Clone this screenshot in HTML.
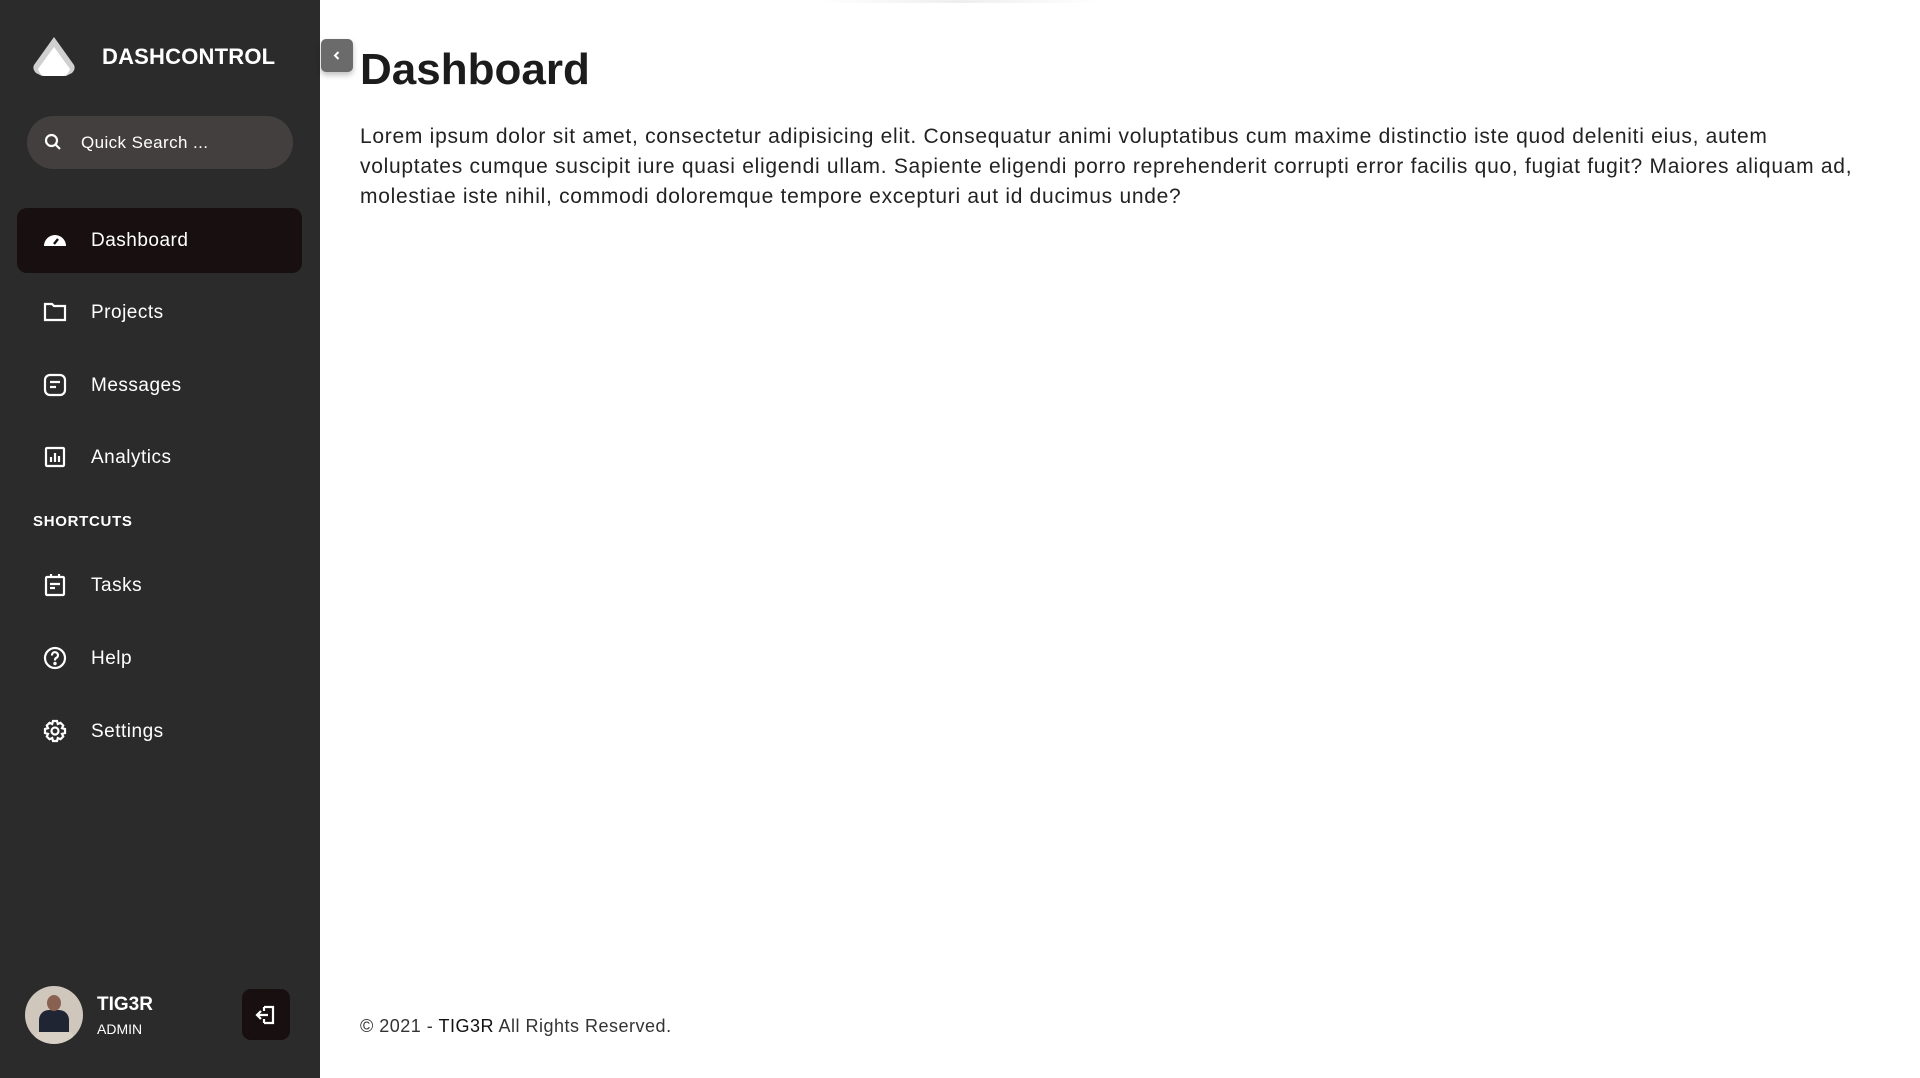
<!DOCTYPE html>
<html><head><meta charset="utf-8"><style>
*{margin:0;padding:0;box-sizing:border-box}
body{width:1920px;height:1078px;overflow:hidden;background:#fff;font-family:"Liberation Sans",sans-serif;position:relative}
.sb{position:absolute;left:0;top:0;width:320px;height:1078px;background:#2b2b2b;color:#fff}
.abs{position:absolute}
.brand{left:102px;top:44px;font-size:22px;font-weight:bold;letter-spacing:0.2px}
.search{left:27px;top:116px;width:266px;height:53px;border-radius:27px;background:#433f3f}
.search span{position:absolute;left:54px;top:17px;font-size:17px;letter-spacing:0.4px}
.item{position:absolute;left:17px;width:285px;height:65px;border-radius:10px;font-size:19px;letter-spacing:0.5px}
.item.act{background:#170f10}
.item svg{position:absolute;left:26px;top:20px}
.item span{position:absolute;left:74px;top:22px}
.sc{left:33px;top:513px;font-size:15px;font-weight:bold;letter-spacing:0.7px}
.toggle{left:321px;top:39px;width:32px;height:33px;border-radius:5px;background:#6b6b6b;box-shadow:0 3px 6px rgba(0,0,0,.25)}
h1{position:absolute;left:360px;top:45px;font-size:44px;font-weight:bold;color:#1c1c1c}
p.t{position:absolute;left:360px;top:122px;font-size:21px;line-height:30px;color:#222;white-space:nowrap;letter-spacing:0.72px}
.foot{left:360px;top:1016px;font-size:18px;color:#333;letter-spacing:0.5px}
</style></head><body>
<div class="sb">
 <svg class="abs" style="left:32px;top:35px" width="44" height="42" viewBox="0 0 44 42"><path d="M22 2 L42 30 Q44 34 40 38 L34 41 H10 L4 38 Q0 34 2 30 Z" fill="#d0d0d0"/><path d="M22 12 L38 34 Q36 40 32 41 H12 Q8 40 6 34 Z" fill="#fff"/></svg>
 <div class="abs brand">DASHCONTROL</div>
 <div class="abs search"><svg class="abs" style="left:17px;top:17px" width="18" height="18" viewBox="0 0 18 18" fill="none" stroke="#fff" stroke-width="2.2"><circle cx="7.5" cy="7.5" r="5.5"/><path d="M11.5 11.5 L16 16"/></svg><span>Quick Search ...</span></div>
 <div class="item act" style="top:208px"><svg width="24" height="24" viewBox="0 0 24 24"><path d="M1 19 A11 11 0 0 1 23 19 Z" fill="#fff" transform="translate(0,-1)"/><path d="M11 16 L15 11" stroke="#170f10" stroke-width="2.4"/></svg><span>Dashboard</span></div>
 <div class="item" style="top:280px"><svg width="24" height="24" viewBox="0 0 24 24" fill="none" stroke="#fff" stroke-width="2.2"><path d="M2 4 H9 L11 6 H22 V20 H2 Z"/></svg><span>Projects</span></div>
 <div class="item" style="top:353px"><svg width="24" height="24" viewBox="0 0 24 24" fill="none" stroke="#fff" stroke-width="2.2"><rect x="2" y="2" width="20" height="20" rx="5"/><path d="M7 9 H17 M7 14 H13"/></svg><span>Messages</span></div>
 <div class="item" style="top:425px"><svg width="24" height="24" viewBox="0 0 24 24" fill="none" stroke="#fff" stroke-width="2.2"><rect x="3" y="3" width="18" height="18" rx="1"/><path d="M8 17 V12 M12 17 V8 M16 17 V11"/></svg><span>Analytics</span></div>
 <div class="abs sc">SHORTCUTS</div>
 <div class="item" style="top:553px"><svg width="24" height="24" viewBox="0 0 24 24" fill="none" stroke="#fff" stroke-width="2.2"><rect x="3" y="4" width="18" height="18" rx="1"/><path d="M8 1 V5 M16 1 V5 M7 11 H17 M7 15 H12"/></svg><span>Tasks</span></div>
 <div class="item" style="top:626px"><svg width="24" height="24" viewBox="0 0 24 24" fill="none" stroke="#fff" stroke-width="2.2"><circle cx="12" cy="12" r="10"/><path d="M9 9.5 A3 3 0 1 1 13 12 Q12 12.5 12 14.5"/><circle cx="12" cy="17.5" r="0.6" fill="#fff"/></svg><span>Help</span></div>
 <div class="item" style="top:699px"><svg width="24" height="24" viewBox="0 0 24 24" fill="none" stroke="#fff" stroke-width="2.2"><path d="M10 2 H14 L14.8 5 L17.5 3.8 L20.2 6.5 L19 9.2 L22 10 V14 L19 14.8 L20.2 17.5 L17.5 20.2 L14.8 19 L14 22 H10 L9.2 19 L6.5 20.2 L3.8 17.5 L5 14.8 L2 14 V10 L5 9.2 L3.8 6.5 L6.5 3.8 L9.2 5 Z"/><circle cx="12" cy="12" r="3.5"/></svg><span>Settings</span></div>
 <div class="abs" style="left:25px;top:986px;width:58px;height:58px;border-radius:50%;background:#cfc6bc;overflow:hidden"><div style="position:absolute;left:14px;top:24px;width:30px;height:36px;background:#1f2533;border-radius:10px 10px 0 0"></div><div style="position:absolute;left:22px;top:9px;width:14px;height:16px;background:#8a6150;border-radius:50%"></div><div style="position:absolute;left:10px;top:46px;width:38px;height:12px;background:#d8d0c4;border-radius:4px"></div></div>
 <div class="abs" style="left:97px;top:994px;font-size:19px;font-weight:bold">TIG3R</div>
 <div class="abs" style="left:97px;top:1021px;font-size:14px">ADMIN</div>
 <div class="abs" style="left:242px;top:989px;width:48px;height:51px;border-radius:9px;background:#170f10"><svg class="abs" style="left:13px;top:15px" width="22" height="22" viewBox="0 0 22 22" fill="none" stroke="#fff" stroke-width="2.2"><path d="M9 3 H18 V19 H9 M9 15 V19 M9 3 V7 M2 11 H13 M6 7 L2 11 L6 15"/></svg></div>
</div>
<div class="abs toggle"><svg class="abs" style="left:11px;top:11px" width="10" height="11" viewBox="0 0 10 11" fill="none" stroke="#fff" stroke-width="2"><path d="M6.5 2 L3 5.5 L6.5 9"/></svg></div>
<div class="abs" style="left:820px;top:0;width:280px;height:3px;background:linear-gradient(90deg,#fff,#eee,#fff)"></div>
<h1>Dashboard</h1>
<p class="t">Lorem ipsum dolor sit amet, consectetur adipisicing elit. Consequatur animi voluptatibus cum maxime distinctio iste quod deleniti eius, autem<br>voluptates cumque suscipit iure quasi eligendi ullam. Sapiente eligendi porro reprehenderit corrupti error facilis quo, fugiat fugit? Maiores aliquam ad,<br>molestiae iste nihil, commodi doloremque tempore excepturi aut id ducimus unde?</p>
<div class="abs foot">© 2021 - <span style="color:#111">TIG3R</span> All Rights Reserved.</div>
</body></html>
